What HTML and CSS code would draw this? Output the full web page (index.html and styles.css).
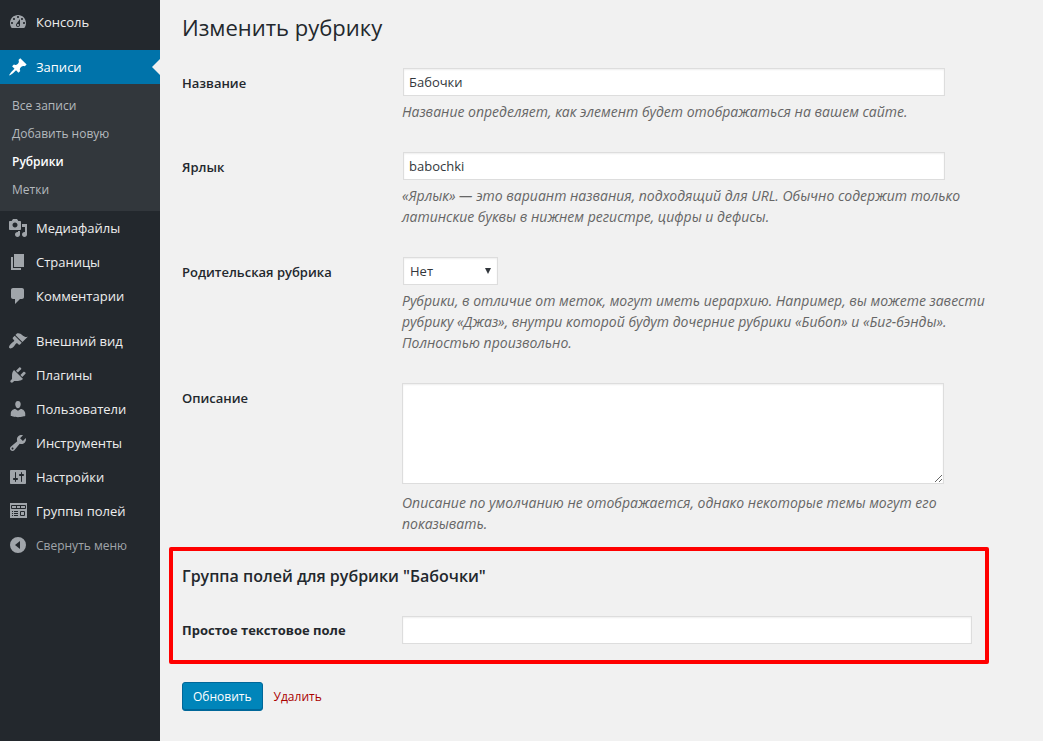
FILE: index.html
```
<!DOCTYPE html>
<html lang="ru">
<head>
    <meta charset="UTF-8">
    <meta name="viewport" content="width=device-width, initial-scale=1.0">
    <title>Изменить рубрику</title>
    <link rel="stylesheet" href="styles.css">
</head>
<body>
    <nav class="sidebar">
        <ul class="menu">
            <li>
                <a href="#" class="menu-item">
                    <svg class="icon" viewBox="0 0 20 20"><path fill-rule="evenodd" d="M3.76 16h12.48c1.1-1.37 1.76-3.11 1.76-5 0-4.42-3.58-8-8-8s-8 3.58-8 8c0 1.89.66 3.63 1.76 5zM10 4c.55 0 1 .45 1 1s-.45 1-1 1-1-.45-1-1 .45-1 1-1zM6 6c.55 0 1 .45 1 1s-.45 1-1 1-1-.45-1-1 .45-1 1-1zm8 0c.55 0 1 .45 1 1s-.45 1-1 1-1-.45-1-1 .45-1 1-1zm-5.37 5.55L12 7v6c0 1.1-.9 2-2 2s-2-.9-2-2c0-.57.24-1.08.63-1.45zM4 10c.55 0 1 .45 1 1s-.45 1-1 1-1-.45-1-1 .45-1 1-1zm12 0c.55 0 1 .45 1 1s-.45 1-1 1-1-.45-1-1 .45-1 1-1zm-5 3c0-.55-.45-1-1-1s-1 .45-1 1 .45 1 1 1 1-.45 1-1z"/></svg>
                    Консоль
                </a>
            </li>
            <li class="separator"></li>
            <li>
                <a href="#" class="menu-item current">
                    <svg class="icon" viewBox="0 0 20 20"><path d="M10.44 3.02l1.82-1.82 6.36 6.35-1.83 1.82c-1.05-.68-2.48-.57-3.41.36l-.75.75c-.92.93-1.04 2.35-.35 3.41l-1.83 1.82-2.41-2.41-2.8 2.79c-.42.42-3.38 2.71-3.8 2.29s1.86-3.39 2.28-3.81l2.79-2.79L4.1 9.36l1.83-1.82c1.05.69 2.48.57 3.4-.36l.75-.75c.93-.92 1.05-2.35.36-3.41z"/></svg>
                    Записи
                </a>
                <ul class="submenu">
                    <li><a href="#">Все записи</a></li>
                    <li><a href="#">Добавить новую</a></li>
                    <li><a href="#" class="active">Рубрики</a></li>
                    <li><a href="#">Метки</a></li>
                </ul>
            </li>
            <li>
                <a href="#" class="menu-item">
                    <svg class="icon" viewBox="0 0 20 20"><path fill-rule="evenodd" d="M13 11V4c0-.55-.45-1-1-1h-1.67L9 1H5L3.67 3H2c-.55 0-1 .45-1 1v7c0 .55.45 1 1 1h10c.55 0 1-.45 1-1zM7 4.5c1.38 0 2.5 1.12 2.5 2.5S8.38 9.5 7 9.5 4.5 8.38 4.5 7 5.62 4.5 7 4.5zM14 6h5v10.5c0 1.38-1.12 2.5-2.5 2.5S14 17.88 14 16.5s1.12-2.5 2.5-2.5c.17 0 .34.02.5.05V9h-3V6zm-4 8.05V13h2v3.5c0 1.38-1.12 2.5-2.5 2.5S7 17.88 7 16.5 8.12 14 9.5 14c.17 0 .34.02.5.05z"/></svg>
                    Медиафайлы
                </a>
            </li>
            <li>
                <a href="#" class="menu-item">
                    <svg class="icon" viewBox="0 0 20 20"><path d="M6 15V2h10v13H6zm-1 1h8v2H3V5h2v11z"/></svg>
                    Страницы
                </a>
            </li>
            <li>
                <a href="#" class="menu-item">
                    <svg class="icon" viewBox="0 0 20 20"><path d="M5 2h9c1.1 0 2 .9 2 2v7c0 1.1-.9 2-2 2h-2l-5 5v-5H5c-1.1 0-2-.9-2-2V4c0-1.1.9-2 2-2z"/></svg>
                    Комментарии
                </a>
            </li>
            <li class="separator"></li>
            <li>
                <a href="#" class="menu-item">
                    <svg class="icon" viewBox="0 0 20 20"><path d="M14.48 11.06L7.41 3.99l1.5-1.5c.5-.56 2.3-.47 3.51.32 1.21.8 1.43 1.28 2.91 2.1 1.18.64 2.45 1.26 4.45.85zm-.71.71L6.7 4.7 4.93 6.47c-.39.39-.39 1.02 0 1.41l1.06 1.06c.39.39.39 1.03 0 1.42-.6.6-1.43 1.11-2.21 1.69-.35.26-.7.53-1.01.84C1.43 14.23.4 16.08 1.4 17.07c.99 1 2.84-.03 4.18-1.36.31-.31.58-.66.85-1.02.57-.78 1.08-1.61 1.69-2.21.39-.39 1.02-.39 1.41 0l1.06 1.06c.39.39 1.02.39 1.41 0z"/></svg>
                    Внешний вид
                </a>
            </li>
            <li>
                <a href="#" class="menu-item">
                    <svg class="icon" viewBox="0 0 20 20"><path d="M13.11 4.36L9.87 7.6 8 5.73l3.24-3.24c.35-.34 1.05-.2 1.56.32.52.51.66 1.21.31 1.55zm-8 1.77l.91-1.12 9.01 9.01-1.19.84c-.71.71-2.63 1.16-3.82 1.16H6.14L4.9 17.26c-.59.59-1.54.59-2.12 0-.59-.58-.59-1.53 0-2.12l1.24-1.24v-3.88c0-1.13.4-3.19 1.09-3.89zm7.26 3.97l3.24-3.24c.34-.35 1.04-.21 1.55.31.52.51.66 1.21.31 1.55l-3.24 3.25z"/></svg>
                    Плагины
                </a>
            </li>
            <li>
                <a href="#" class="menu-item">
                    <svg class="icon" viewBox="0 0 20 20"><path d="M10 9.25c-2.27 0-2.73-3.44-2.73-3.44C7 4.02 7.82 2 9.97 2c2.16 0 2.98 2.02 2.71 3.81 0 0-.41 3.44-2.68 3.44zm0 2.57L12.72 10c2.39 0 4.52 2.33 4.52 4.53v2.49s-3.65 1.13-7.24 1.13c-3.65 0-7.24-1.13-7.24-1.13v-2.49c0-2.25 1.94-4.48 4.47-4.48z"/></svg>
                    Пользователи
                </a>
            </li>
            <li>
                <a href="#" class="menu-item">
                    <svg class="icon" viewBox="0 0 20 20"><path fill-rule="evenodd" d="M16.68 9.77c-1.34 1.34-3.3 1.67-4.95.99l-5.41 6.52c-.99.99-2.59.99-3.58 0s-.99-2.59 0-3.57l6.52-5.42c-.68-1.65-.35-3.61.99-4.95 1.28-1.28 3.12-1.62 4.72-1.06l-2.89 2.89 2.82 2.82 2.86-2.87c.53 1.58.18 3.39-1.08 4.65zM3.81 16.21c.4.39 1.04.39 1.43 0 .4-.4.4-1.04 0-1.43-.39-.4-1.03-.4-1.43 0-.39.39-.39 1.03 0 1.43z"/></svg>
                    Инструменты
                </a>
            </li>
            <li>
                <a href="#" class="menu-item">
                    <svg class="icon" viewBox="0 0 20 20"><path fill-rule="evenodd" d="M18 16V4c0-.55-.45-1-1-1H3c-.55 0-1 .45-1 1v12c0 .55.45 1 1 1h14c.55 0 1-.45 1-1zM8 11h1c.55 0 1 .45 1 1s-.45 1-1 1H8v1.5c0 .28-.22.5-.5.5s-.5-.22-.5-.5V13H6c-.55 0-1-.45-1-1s.45-1 1-1h1V5.5c0-.28.22-.5.5-.5s.5.22.5.5V11zm5-2h-1c-.55 0-1-.45-1-1s.45-1 1-1h1V5.5c0-.28.22-.5.5-.5s.5.22.5.5V7h1c.55 0 1 .45 1 1s-.45 1-1 1h-1v5.5c0 .28-.22.5-.5.5s-.5-.22-.5-.5V9z"/></svg>
                    Настройки
                </a>
            </li>
            <li>
                <a href="#" class="menu-item">
                    <svg class="icon" viewBox="0 0 20 20">
                        <path d="M2 2h17v15H2z"/>
                        <path class="icon-lines" d="M3.5 4.5h14v3h-14zM8.5 4.5v3M12.5 4.5v3M4 10.5h1M6 10.5h4M4 12.5h1M6 12.5h4M4 14.5h1M6 14.5h4M12.5 10.5h4v4h-4z"/>
                    </svg>
                    Группы полей
                </a>
            </li>
            <li>
                <button type="button" class="menu-item collapse">
                    <svg class="icon" viewBox="0 0 20 20"><path fill-rule="evenodd" d="M10 2a8 8 0 1 1 0 16 8 8 0 0 1 0-16zM12 6v8l-5-4z"/></svg>
                    Свернуть меню
                </button>
            </li>
        </ul>
    </nav>

    <main class="content">
        <h1>Изменить рубрику</h1>
        <form>
            <div class="form-row">
                <label for="name">Название</label>
                <div class="field">
                    <input type="text" id="name" value="Бабочки">
                    <p class="description">Название определяет, как элемент будет отображаться на вашем сайте.</p>
                </div>
            </div>
            <div class="form-row">
                <label for="slug">Ярлык</label>
                <div class="field">
                    <input type="text" id="slug" value="babochki">
                    <p class="description">«Ярлык» — это вариант названия, подходящий для URL. Обычно содержит только латинские буквы в нижнем регистре, цифры и дефисы.</p>
                </div>
            </div>
            <div class="form-row">
                <label for="parent">Родительская рубрика</label>
                <div class="field">
                    <div class="select-wrap">
                        <select id="parent">
                            <option>Нет</option>
                        </select>
                    </div>
                    <p class="description">Рубрики, в отличие от меток, могут иметь иерархию. Например, вы можете завести рубрику «Джаз», внутри которой будут дочерние рубрики «Бибоп» и «Биг-бэнды». Полностью произвольно.</p>
                </div>
            </div>
            <div class="form-row">
                <label for="description">Описание</label>
                <div class="field">
                    <textarea id="description"></textarea>
                    <p class="description">Описание по умолчанию не отображается, однако некоторые темы могут его показывать.</p>
                </div>
            </div>

            <section class="field-group">
                <h2>Группа полей для рубрики "Бабочки"</h2>
                <div class="group-row">
                    <label for="simple">Простое текстовое поле</label>
                    <input type="text" id="simple">
                </div>
            </section>

            <div class="actions">
                <button type="submit" class="update-button">Обновить</button>
                <a href="#" class="delete">Удалить</a>
            </div>
        </form>
    </main>
</body>
</html>
```
FILE: styles.css
```
* {
    box-sizing: border-box;
}

body {
    margin: 0;
    display: flex;
    min-height: 100vh;
    background-color: #f1f1f1;
    color: #23282d;
    font-family: "Open Sans", "Noto Sans", sans-serif;
    font-size: 13px;
    line-height: 21px;
}

/* sidebar */
.sidebar {
    flex: 0 0 160px;
    background-color: #23282d;
    padding-top: 5px;
}

.menu,
.submenu {
    list-style: none;
    margin: 0;
    padding: 0;
}

.menu-item {
    display: flex;
    align-items: center;
    gap: 8px;
    width: 100%;
    height: 34px;
    padding: 0 8px;
    color: #eee;
    font-size: 13px;
    text-decoration: none;
    white-space: nowrap;
}

.icon {
    flex: none;
    width: 20px;
    height: 20px;
    fill: #a0a5aa;
}

.icon-lines {
    fill: none;
    stroke: #23282d;
}

.separator {
    height: 11px;
}

.menu-item.current {
    position: relative;
    background-color: #0073aa;
    color: #fff;
}

.menu-item.current .icon {
    fill: #fff;
}

.menu-item.current::after {
    content: "";
    position: absolute;
    right: 0;
    top: 9px;
    border: 8px solid transparent;
    border-right-color: #f1f1f1;
    border-left: 0;
}

.submenu {
    background-color: #32373c;
    padding: 8px 0 7px;
}

.submenu a {
    display: block;
    padding: 3px 12px 4px;
    color: #b4b9be;
    font-size: 12px;
    text-decoration: none;
}

.submenu a.active {
    color: #fff;
    font-weight: 600;
}

.collapse {
    border: none;
    background: none;
    color: #a0a5aa;
    font-family: inherit;
    font-size: 12px;
    cursor: pointer;
}

/* content */
.content {
    flex: 1;
    min-width: 0;
    padding: 11px 20px 20px 22px;
}

h1 {
    margin: 0 0 25px;
    font-size: 22px;
    font-weight: 400;
    line-height: 32px;
}

.form-row {
    display: grid;
    grid-template-columns: 220px 1fr;
    margin-bottom: 30px;
}

.form-row > label {
    padding-top: 5px;
    font-weight: 600;
}

.field {
    max-width: 590px;
}

input,
textarea,
select {
    display: block;
    border: 1px solid #ddd;
    border-radius: 0;
    background-color: #fff;
    box-shadow: inset 0 1px 2px rgba(0, 0, 0, 0.07);
    color: #32373c;
    font-family: inherit;
    font-size: 13px;
}

.field input,
.field textarea {
    width: 100%;
    max-width: 542px;
}

.field input,
.select-wrap {
    margin-left: 1px;
}

input {
    height: 28px;
    padding: 3px 5px;
}

textarea {
    height: 101px;
    margin-bottom: 8px;
    padding: 2px 6px;
    resize: vertical;
}

.select-wrap {
    position: relative;
    width: 95px;
}

.select-wrap::after {
    content: "";
    position: absolute;
    right: 7px;
    top: 11px;
    border: 3px solid transparent;
    border-top: 6px solid #32373c;
    border-bottom: 0;
}

select {
    appearance: none;
    width: 100%;
    height: 28px;
    padding: 0 6px;
}

.description {
    margin: 5px 0 0;
    color: #666;
    font-size: 14px;
    font-style: italic;
}

/* custom fields */
.field-group {
    max-width: 820px;
    margin: -17px 0 18px -13px;
    padding: 14px 13px 16px 9px;
    border: 4px solid #f00;
    border-radius: 2px;
}

h2 {
    margin: 0 0 29px;
    font-size: 16px;
    font-weight: 600;
    line-height: 22px;
}

.group-row {
    display: grid;
    grid-template-columns: 220px 1fr;
    align-items: center;
}

.group-row label {
    font-weight: 700;
}

/* buttons */
.actions {
    display: flex;
    align-items: center;
    gap: 11px;
    font-size: 12px;
}

.update-button {
    height: 29px;
    padding: 0 10px;
    border: 1px solid #006799;
    border-radius: 3px;
    background-color: #0085ba;
    box-shadow: inset 0 -1px 0 #006799;
    color: #fff;
    font-family: inherit;
    font-size: 12px;
    cursor: pointer;
}

.delete {
    color: #a00;
    text-decoration: none;
}
```
